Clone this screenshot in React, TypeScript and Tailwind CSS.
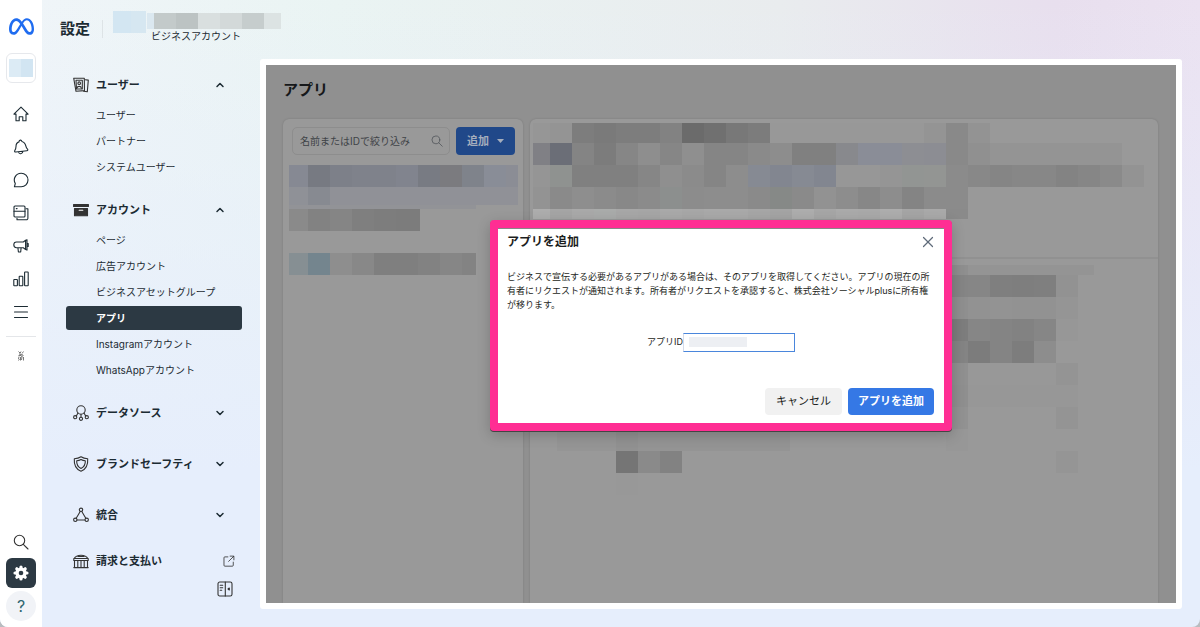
import React from 'react';
import { SiMeta } from 'react-icons/si';
import { ChevronDown, ChevronUp, X } from 'lucide-react';

type Cell = [number, string];
type MosaicRow = { h: number; cells: Cell[] };

// n cells of the regular 22px mosaic grid
const grid = (...colors: string[]): Cell[] => colors.map(c => [22, c] as Cell);

const LIST_ROWS: MosaicRow[] = [
  { h: 22, cells: [[19, '#868993'], ...grid('#777a82', '#7d8089', '#7f828b', '#7f828b', '#81848e', '#787b83', '#7b7b7f', '#7f838b', '#898d97'), [12, '#8b8d95']] },
  { h: 18, cells: [[19, '#8f9197'], ...grid('#878a91'), [188, '#909197']] },
  { h: 4, cells: [[187, '#929397']] },
  { h: 22, cells: [[19, '#8a8a8a'], ...grid('#828282', '#858585', '#7f7f7f', '#7d7d7d'), [24, '#7c7c7c']] },
  { h: 22, cells: [] },
  { h: 22, cells: [[19, '#868f93'], ...grid('#74858e', '#8e8e8e', '#888888', '#7f7f7f', '#7f7f7f', '#828282', '#868686'), [14, '#838383']] },
];

const DETAIL_ROWS: MosaicRow[] = [
  { h: 20, cells: [[17, '#969696'], ...grid('#949494', '#7d7d7d', '#7a7a7a', '#7d7d7d', '#7d7d7d', '#828282', '#6b6b6b', '#707070', '#787878', '#7c7c7c'), [154, '#989898'], ...grid('#949494', '#898989', '#939393')] },
  { h: 22, cells: [[17, '#808085'], ...grid('#6b6e77', '#848484', '#7c7c7c', '#868686', '#8e8e8e', '#868686', '#8f8f8f', '#858585', '#858585', '#8a8a8a', '#8d8d8d', '#808080', '#808080', '#88898d', '#8a8d97', '#8a8d97', '#8d8e93', '#8c8d93', '#898989', '#909090'), [132, '#949494']] },
  { h: 22, cells: [[17, '#959595'], ...grid('#8f9290', '#808080', '#808080', '#808080', '#868686', '#8f8f8f', '#8b8b8b', '#858585', '#8d8d8d', '#868a93', '#828690', '#868a93', '#828690', '#979797', '#979797', '#959595', '#929593', '#939593', '#8b8b8b', '#888888', '#858585', '#878787', '#878787', '#838383', '#868686', '#8a8a8a', '#939393')] },
  { h: 22, cells: [[17, '#939393'], ...grid('#8a8a8a', '#8e8e8e', '#8b8b8b', '#888888', '#8b8b8b', '#8c8f8e', '#8c8c8c', '#8d8d8d', '#8d8d8d', '#8a8a8a', '#868987', '#8a8a8a', '#929292', '#8d8d8d', '#878787', '#8d8d8d', '#848484', '#8b8b8b', '#8b8b8b')] },
  { h: 10, cells: [[17, '#adadad'], ...grid('#a5a5a5', '#a9a9a9', '#a9abaa', '#a7a7a7', '#a6a6a6', '#a9a9a9', '#a7a7a7', '#a9a9a9', '#a9a9a9', '#a6a6a6', '#a4a4a4', '#adadad', '#a6a6a6', '#aaaaaa', '#a9a9a9', '#adadad', '#a5a5a5', '#a9a9a9', '#8a8a8a')] },
];

const ASSET_ROWS: MosaicRow[] = [
  { h: 10, cells: [[413, ''], [22, '#8f8f8f'], [126, '#949494']] },
  { h: 22, cells: [[413, ''], ...grid('#858585', '#868686', '#7f7f7f', '#7e7e7e', '#7f7f7f', '#929292')] },
  { h: 22, cells: [[413, ''], ...grid('#8f8f8f', '#929292', '#939393', '#929292', '#929292', '#959595')] },
  { h: 22, cells: [[413, ''], ...grid('#7d7d7d', '#868686', '#848484', '#828282', '#868686', '#979797')] },
  { h: 22, cells: [[413, ''], ...grid('#848484', '#7c7c7c', '#848484', '#7d7d7d', '#8d8d8d')] },
  { h: 22, cells: [[413, ''], [22, '#909090'], [88, '#989898'], [22, '#949494']] },
  { h: 22, cells: [[413, ''], [22, '#8f8f8f'], [110, '#979797']] },
  { h: 22, cells: [[413, ''], [22, '#929292'], [88, ''], [22, '#949494']] },
  { h: 22, cells: [[24, ''], [59, '#959595'], [22, '#919191'], [152, '#949494'], [156, ''], [22, '#979797']] },
  { h: 22, cells: [[83, ''], ...grid('#757575', '#8a8a8a', '#828282'), [374, ''], [22, '#959595']] },
  { h: 22, cells: [[83, ''], [22, '#989898']] },
];

const Mosaic: React.FC<{ rows: MosaicRow[] }> = ({ rows }) => (
  <div className="flex flex-col overflow-hidden" aria-hidden="true">
    {rows.map((row, i) => (
      <div key={i} className="flex" style={{ height: row.h }}>
        {row.cells.map(([w, color], j) => (
          <span key={j} className="shrink-0" style={{ width: w, background: color || 'transparent' }} />
        ))}
      </div>
    ))}
  </div>
);

const Icon = ({ children, className = 'size-4' }: any) => (
  <svg viewBox="0 0 16 16" fill="none" stroke="currentColor" strokeWidth="1.1" strokeLinecap="round" strokeLinejoin="round" className={className} aria-hidden="true">
    {children}
  </svg>
);

const SearchIcon = ({ className }: any) => (
  <Icon className={className}><circle cx="6.5" cy="6.5" r="5.2" /><path d="M10.3 10.3 15 15" /></Icon>
);

const RAIL = [
  { label: 'ホーム', icon: <Icon><path d="M.9 8.1 8 1.2l7.1 6.9H13v6.7H9.8v-4.1H6.2v4.1H3V8.1z" /></Icon> },
  { label: 'お知らせ', icon: <Icon><path d="M6 2.9c0-2.200 2.500-2.300 2.900-.4 2.900.7 3.600 2.800 4 4.700.3 1.600.8 2.200 1.600 3 .7.8.2 1.400-.6 1.500L2.800 13c-1.100.1-1.500-.6-1-1.500.7-1.100 1.200-2.200 1.200-4C3 5.300 4 3.500 6 2.900zM5.500 13c.5 2.500 4.200 2.200 4.500-.7" /></Icon> },
  { label: 'メッセージ', icon: <Icon><path d="M8.200 1.200a6.800 6.800 0 1 1 0 13.600H1.400l.9-3.300a6.800 6.800 0 0 1 5.900-10.300z" /></Icon> },
  { label: 'コンテンツ', icon: <Icon><rect x="1" y="1" width="11" height="11" rx="1" /><path d="M1 6.300h11M3.300 3.600h.8M13 3.800h1.900v9.400a1.600 1.600 0 0 1-1.600 1.600H4v-1.500" /></Icon> },
  { label: '広告', icon: <Icon><path d="M12.600 2.300 10.300 4H3.500C1.700 4 .8 5.200.8 6.800s.9 2.900 2.700 2.900h6.800l2.300 1.800zM12.600 2.300l1.400-.5v10.300l-1.400-.6M14.200 5.500h1v3h-1M4.900 9.800l.5 4.200h2.300l.4-4.200" /></Icon> },
  { label: 'インサイト', icon: <Icon><rect x=".8" y="8.500" width="3.600" height="6.300" rx=".5" /><rect x="6.200" y="5.200" width="3.600" height="9.600" rx=".5" /><rect x="11.600" y="1" width="3.600" height="13.800" rx=".5" /></Icon> },
  { label: 'すべてのツール', icon: <Icon><path d="M1.500 2.500h13M1.500 8h13M1.500 13.500h13" /></Icon> },
];

const NAV = [
  {
    label: 'ユーザー',
    items: ['ユーザー', 'パートナー', 'システムユーザー'],
    icon: <Icon><path d="M.7 1.200h10.600l.2 12.400-8.500.7z" /><path d="M3 3.200h6.300V12H3.500z" /><circle cx="6.200" cy="6.200" r="1.300" /><path d="M4 11.300c.3-2.600 4.100-2.600 4.400 0M12.300 2.800l3 .3-1 11.700-3.700-.6" /></Icon>,
  },
  {
    label: 'アカウント',
    items: ['ページ', '広告アカウント', 'ビジネスアセットグループ', 'アプリ', 'Instagramアカウント', 'WhatsAppアカウント'],
    icon: <Icon><path d="M.6 2.500h14.800v2H.6zM1.500 6.500h13v7.300h-13z" fill="currentColor" /><path d="M6.200 8.300h3.600" stroke="white" /></Icon>,
  },
  {
    label: 'データソース',
    icon: <Icon><circle cx="8" cy="5" r="4.200" /><circle cx="2.200" cy="12.200" r="1.600" /><circle cx="8" cy="13.800" r="1.600" /><circle cx="13.800" cy="12.200" r="1.600" /><path d="M5 8 3.300 11M8 9.200v3M11 8l1.700 3" /></Icon>,
  },
  {
    label: 'ブランドセーフティ',
    icon: <Icon><path d="M8 .8c2 1.300 4.200 1.800 6.700 1.900.4 5.500-.8 10.200-6.700 12.500C2.100 12.900.9 8.200 1.300 2.700 3.800 2.600 6 2.100 8 .8z" /><path d="M8 3.500c1.300.8 2.600 1.200 4.300 1.300.2 3.400-.7 6-4.300 7.700-3.600-1.700-4.500-4.300-4.300-7.700C5.400 4.700 6.700 4.300 8 3.500z" /></Icon>,
  },
  {
    label: '統合',
    icon: <Icon><circle cx="8" cy="2.800" r="1.700" /><circle cx="2.300" cy="12.800" r="1.700" /><circle cx="13.700" cy="12.800" r="1.700" /><path d="M7.200 4.500 3.200 11.300M8.800 4.500l4 6.800M4.100 13h7.800" /></Icon>,
  },
];

const Rail: React.FC = () => (
  <aside className="flex w-[42px] shrink-0 flex-col items-center bg-white text-[#1c2b33]">
    <a href="#" aria-label="Meta" className="flex h-[53px] items-center text-[#1f6cf0]"><SiMeta size={25} /></a>
    <button aria-label="アカウント切り替え" className="mb-[14px] flex size-[30px] items-center justify-center rounded-md border border-[#e6e8ec]">
      <span className="h-[18px] w-3 bg-[#dcebf5]" />
      <span className="h-[18px] w-3 bg-[#d2e5f2]" />
    </button>
    {RAIL.map(item => (
      <button key={item.label} aria-label={item.label} className="flex h-[33px] w-full items-center justify-center">{item.icon}</button>
    ))}
    <hr className="mt-2 w-[30px] border-[#e4e6e9]" />
    <button aria-label="ショートカット" className="mt-[11px] flex size-4 items-center justify-center text-[#555]">
      <svg viewBox="0 0 6 10" className="h-[10px] w-[6px]" fill="none" stroke="currentColor" strokeWidth=".8" aria-hidden="true">
        <path d="M.5.500 2 2M3 .5 2 2.500M5.500.5 4 2.500M1 3l4 1M.5 4.500h3M5.500 4.500 3 6M1 5.500.5 8M2.500 6v3.500M4 6l-.5 3M5.500 6v3.500M1.500 8 .5 9.500" />
      </svg>
    </button>
    <div className="mt-auto flex flex-col items-center pb-[6px]">
      <button aria-label="検索" className="mb-2 text-[#333]"><SearchIcon className="size-4" /></button>
      <button aria-label="設定" className="mb-[3px] flex size-[30px] items-center justify-center rounded-md bg-[#2c3943] text-white">
        <svg viewBox="0 0 16 16" className="size-4" aria-hidden="true">
          <g stroke="currentColor" strokeWidth="3.2" strokeLinecap="round">
            <path d="M8 2v12M2 8h12M3.800 3.800l8.400 8.400M12.200 3.800l-8.400 8.400" />
          </g>
          <circle cx="8" cy="8" r="5.600" fill="currentColor" />
          <circle cx="8" cy="8" r="2.300" fill="#2c3943" />
        </svg>
      </button>
      <button aria-label="ヘルプ" className="flex size-[30px] items-center justify-center rounded-full bg-[#f1f3f7] text-base text-[#2f6671]">?</button>
    </div>
  </aside>
);

const SideNav: React.FC = () => (
  <nav className="w-[218px] shrink-0 pt-[14px] pr-[18px] pl-6">
    {NAV.map(group => (
      <section key={group.label} className={group.items ? 'mb-[19px]' : 'mb-[27px] last-of-type:mb-[22px]'}>
        <button className="flex h-6 w-full items-center pr-4 pl-[7px] text-[#333]" aria-expanded={!!group.items}>
          {group.icon}
          <span className="ml-[7px] text-[11px] font-bold text-[#1c2b33]">{group.label}</span>
          {group.items
            ? <ChevronUp size={12} strokeWidth={3} className="ml-auto text-[#1c2b33]" />
            : <ChevronDown size={12} strokeWidth={3} className="ml-auto text-[#1c2b33]" />}
        </button>
        {group.items && (
          <ul className="mt-[6px] flex flex-col gap-[2px]">
            {group.items.map(item => (
              <li key={item}>
                <a href="#" className={`flex h-6 items-center rounded-[3px] pl-[30px] text-[10px] whitespace-nowrap ${item === 'アプリ' ? 'bg-[#2c3943] font-bold text-white' : 'text-[#1c2b33]'}`}>{item}</a>
              </li>
            ))}
          </ul>
        )}
      </section>
    ))}
    <a href="#" className="flex h-6 items-center pr-[7px] pl-[7px] text-[#333]">
      <Icon><path d="M1.200 5.500C3.500 1.200 12.500 1.200 14.800 5.500zM.8 5.500h14.400v2H.8zM1.500 7.500v7M4.800 7.500v7M8 7.500v7M11.200 7.500v7M14.500 7.500v7M.8 14.600h14.400M5 3.500h6" /></Icon>
      <span className="ml-[7px] text-[11px] font-bold text-[#1c2b33]">請求と支払い</span>
      <Icon className="ml-auto size-3"><path d="M6.500 2.500H2.500A1.200 1.200 0 0 0 1.300 3.700v10a1.200 1.200 0 0 0 1.200 1.200h10a1.200 1.200 0 0 0 1.200-1.200V9.500M9.500 1.500h5v5M14.300 1.700 7.500 8.500" /></Icon>
    </a>
    <div className="mt-1 flex h-6 items-center justify-end pr-[9px]">
      <button aria-label="メニューを折りたたむ" className="text-[#333]">
        <Icon><rect x="1" y="1" width="14" height="14" rx="1.800" /><path d="M8.300 1v14M3.200 4.200h2.500M3.200 6.700h2.500M3.200 9.200h1.500" /><path d="m12.300 7-1.300 1 1.300 1z" fill="currentColor" /></Icon>
      </button>
    </div>
  </nav>
);

const AddAppDialog: React.FC = () => (
  <div role="dialog" aria-labelledby="dialog-title" className="w-[462px] rounded-[4px] border-8 border-[#ff2e93] bg-white text-[#1c1e21] shadow-[0_1px_0_#444,0_4px_14px_rgba(0,0,0,0.2)]">
    <div className="flex h-7 items-center justify-between border-t border-[#888] pr-[7px] pl-[9px]">
      <h2 id="dialog-title" className="text-xs font-bold">アプリを追加</h2>
      <button aria-label="閉じる" className="text-[#5f6b7a]"><X size={18} strokeWidth={1.6} /></button>
    </div>
    <p className="mt-[14px] px-[9px] text-[9px] leading-[14px]">
      ビジネスで宣伝する必要があるアプリがある場合は、そのアプリを取得してください。アプリの現在の所有者にリクエストが通知されます。所有者がリクエストを承認すると、株式会社ソーシャルplusに所有権が移ります。
    </p>
    <div className="mt-[21px] flex items-center justify-center text-[9px]">
      <label htmlFor="app-id">アプリID</label>
      <div className="relative">
        <input id="app-id" type="text" className="block h-[19px] w-28 border border-[#4a86dc] border-l-[#d5dbea] bg-white px-1 outline-none" />
        <span className="absolute top-1 left-1.5 h-[10px] w-[58px] bg-[#edeff3]" />
      </div>
    </div>
    <div className="mt-9 flex justify-end gap-[6px] pr-[10px] pb-2 text-[11px]">
      <button className="h-[27px] rounded-[4px] bg-[#f1f1f1] px-[11px]">キャンセル</button>
      <button className="h-[27px] rounded-[4px] bg-[#3578e5] px-[10px] font-bold text-white">アプリを追加</button>
    </div>
  </div>
);

const AppsPanel: React.FC = () => (
  <main className="mr-[18px] mb-[18px] flex min-w-0 flex-1 rounded-[3px] bg-white p-[6px]">
    <div className="relative flex min-w-0 flex-1 flex-col overflow-hidden bg-[#909090] pr-[18px] pl-[17px]">
      <h1 className="mb-1 flex h-[50px] items-center text-[15px] font-bold text-[#16181a]">アプリ</h1>
      <div className="flex flex-1 gap-[7px]">
        <section className="w-60 shrink-0 rounded-t-md bg-[#999] shadow-[0_0_2px_rgba(0,0,0,0.18)]">
          <div className="flex gap-[6px] px-2 pt-2 pb-[10px] pl-[9px]">
            <label className="flex h-7 min-w-0 flex-1 items-center rounded-[5px] border border-[#8d8d8d] pr-[6px] pl-[7px]">
              <input type="text" aria-label="絞り込み" placeholder="名前またはIDで絞り込み" className="min-w-0 flex-1 bg-transparent text-[10px] outline-none placeholder:text-[#3f4347]" />
              <SearchIcon className="size-3 text-[#54585c]" />
            </label>
            <button className="flex h-7 items-center gap-2 rounded-[4px] bg-[#204889] px-[11px] text-[11px] font-bold text-[#a5aebd]">
              追加
              <svg viewBox="0 0 7 4" className="h-1 w-[7px]" fill="currentColor" aria-hidden="true"><path d="M0 0h7L3.500 4z" /></svg>
            </button>
          </div>
          <div className="pr-[5px] pl-[6px]"><Mosaic rows={LIST_ROWS} /></div>
        </section>
        <section className="flex min-w-0 flex-1 flex-col overflow-hidden rounded-t-md bg-[#999] shadow-[0_0_2px_rgba(0,0,0,0.18)]">
          <div className="h-[140px] border-b-2 border-[#919191] pt-1 pl-[3px]"><Mosaic rows={DETAIL_ROWS} /></div>
          <div className="pt-[6px] pl-[3px]"><Mosaic rows={ASSET_ROWS} /></div>
        </section>
      </div>
      <div className="absolute inset-0 flex items-center justify-center pb-[18px]">
        <AddAppDialog />
      </div>
    </div>
  </main>
);

const App: React.FC = () => (
  <div className="bg-[#b9bcc0] font-['Inter','Noto_Sans_CJK_JP',sans-serif]">
    <div className="flex min-h-screen overflow-hidden rounded-b-lg bg-[linear-gradient(to_bottom,transparent,#e6eefc_75%),linear-gradient(to_right,#f0f5f9,#eaf4f3_28%,#e9ecee_65%,#e8dfee_88%,#ebe2f1)]">
      <Rail />
      <div className="flex min-w-0 flex-1 flex-col">
        <header className="flex h-[59px] shrink-0 pt-[11px] pl-[18px]">
          <h2 className="flex h-9 items-center text-[15px] font-bold text-[#1c2b33]">設定</h2>
          <div className="mt-[9px] ml-3 h-[18px] w-px bg-[#dde3e6]" />
          <div className="ml-[10px] flex h-[22px]">
            <span className="w-[18px] bg-[#d3e6f2]" />
            <span className="w-[15px] bg-[#d6e7f1]" />
          </div>
          <div className="ml-px">
            <div className="mt-[2px] flex h-4">
              <span className="w-[7px] bg-[#dbe8f0]" />
              <span className="w-[22px] bg-[#c3caca]" />
              <span className="w-[22px] bg-[#bcc3c3]" />
              <span className="w-[22px] bg-[#d9dfdf]" />
              <span className="w-[22px] bg-[#d3d9d9]" />
              <span className="w-[22px] bg-[#c6cdcd]" />
              <span className="w-[17px] bg-[#dce3e3]" />
            </div>
            <div className="pl-1 text-[10px] leading-[14px] text-[#1c2b33]">ビジネスアカウント</div>
          </div>
        </header>
        <div className="flex flex-1">
          <SideNav />
          <AppsPanel />
        </div>
      </div>
    </div>
  </div>
);

export default App;
